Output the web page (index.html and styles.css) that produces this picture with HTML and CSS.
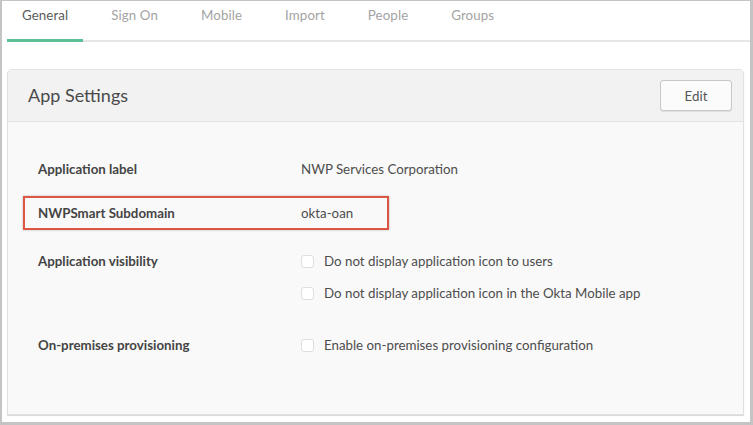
FILE: index.html
```html
<!DOCTYPE html>
<html>
<head>
<meta charset="utf-8">
<link rel="stylesheet" href="styles.css">
</head>
<body>
<div class="frame">
  <nav class="tabs">
    <span class="tab active">General</span>
    <span class="tab">Sign On</span>
    <span class="tab">Mobile</span>
    <span class="tab">Import</span>
    <span class="tab">People</span>
    <span class="tab">Groups</span>
  </nav>
  <section class="panel">
    <header class="panel-head">
      <h2 class="panel-title">App Settings</h2>
      <button class="btn">Edit</button>
    </header>
    <div class="panel-body">
      <div class="row r-label">
        <div class="label">Application label</div>
        <div class="value">NWP Services Corporation</div>
      </div>
      <div class="row highlight">
        <div class="label">NWPSmart Subdomain</div>
        <div class="value">okta-oan</div>
      </div>
      <div class="row r-vis">
        <div class="label">Application visibility</div>
        <div class="value checks">
          <label class="check"><span class="box"></span>Do not display application icon to users</label>
          <label class="check"><span class="box"></span>Do not display application icon in the Okta Mobile app</label>
        </div>
      </div>
      <div class="row r-prov">
        <div class="label">On-premises provisioning</div>
        <div class="value checks">
          <label class="check"><span class="box"></span>Enable on-premises provisioning configuration</label>
        </div>
      </div>
    </div>
  </section>
</div>
</body>
</html>
```
FILE: styles.css
```css
* { box-sizing: border-box; }
html, body { margin: 0; padding: 0; }
body {
  width: 753px;
  height: 425px;
  font-family: Lato, "Liberation Sans", sans-serif;
  background: #fff;
  overflow: hidden;
}
.frame {
  width: 753px;
  height: 425px;
  border-top: 1px solid #c4c4c4;
  border-left: 2px solid #c4c4c4;
  border-right: 3px solid #c4c4c4;
  border-bottom: 3px solid #c4c4c4;
  background: #fff;
  padding: 0 0 0 5px;
}
.tabs {
  display: flex;
  gap: 13px;
  height: 41px;
  border-bottom: 2px solid #e6e6e6;
}
.tab {
  font-size: 13.3px;
  color: #a3a3a3;
  padding: 6px 15px 0 15px;
  letter-spacing: 0.1px;
}
.tab.active {
  color: #5a5a5a;
  border-bottom: 3px solid #5cc097;
  margin-bottom: -2px;
}
.panel {
  margin: 27px 6px 0 0;
  border: 1px solid #e1e1e1;
  border-radius: 5px 5px 0 0;
  background: #f9f9f9;
  height: 346px;
  box-shadow: 0 1px 1px #d8d8d8;
}
.panel-head {
  display: flex;
  align-items: center;
  justify-content: space-between;
  height: 52px;
  background: #f2f2f2;
  border-bottom: 1px solid #e3e3e3;
  border-radius: 5px 5px 0 0;
  padding: 0 11px 0 20px;
}
.panel-title {
  margin: 0 0 2px 0;
  font-size: 18px;
  font-weight: normal;
  color: #4a4a4a;
}
.btn {
  width: 72px;
  height: 31px;
  background: #fbfbfb;
  border: 1px solid #c8c8c8;
  border-radius: 3px;
  font-family: inherit;
  font-size: 13.3px;
  color: #555;
  box-shadow: 0 1px 0 #e0e0e0;
}
.panel-body {
  padding: 37px 0 0 15px;
}
.row {
  display: flex;
  align-items: flex-start;
  width: 366px;
  padding: 0 0 0 15px;
  font-size: 13.3px;
  line-height: 20px;
}
.row .label {
  width: 263px;
  flex: none;
  font-weight: bold;
  color: #444;
}
.row .value {
  color: #4d4d4d;
  white-space: nowrap;
}
.row.highlight {
  margin-top: 17px;
  border: 2px solid #dd5543;
  box-shadow: 0 0 2px #b5b5b5;
  height: 34px;
  padding-left: 13px;
  align-items: center;
}
.row.highlight .label,
.row.highlight .value { line-height: 30px; }
.r-vis { margin-top: 21px; }
.r-prov { margin-top: 32px; }
.checks {
  display: flex;
  flex-direction: column;
  gap: 12px;
}
.check {
  display: flex;
  align-items: center;
  gap: 10px;
}
.box {
  width: 13px;
  height: 13px;
  border: 1px solid #dedede;
  border-radius: 3px;
  background: #fff;
  flex: none;
}
```
